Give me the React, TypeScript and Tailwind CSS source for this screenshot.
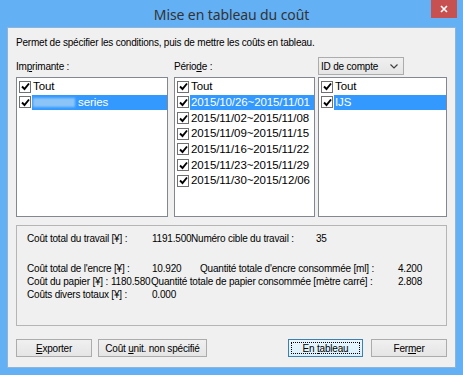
import React from 'react';

const UI = { fontFamily: '"Liberation Sans", Arial, sans-serif' };

// Win8 style checkbox, always checked here
const Check = () => (
  <span className="w-[12px] h-[12px] shrink-0 border border-[#707070] bg-white flex items-center justify-center">
    <svg width="9" height="9" viewBox="0 0 9 9">
      <path d="M1 4.5 L3.5 7 L8 1.5" fill="none" stroke="#000" strokeWidth="1.9" />
    </svg>
  </span>
);

type Row = { text: React.ReactNode; selected?: boolean };

const ListBox = ({ width, rows }: { width: string; rows: Row[] }) => (
  <div className={`${width} h-[140px] border border-[#828790] bg-white pt-[1px]`}>
    {rows.map((r, i) => (
      <div key={i} className="h-[15.67px] flex items-center pl-[2px]">
        <Check />
        <span
          className={`flex-1 h-[15px] leading-[15px] ml-[1px] pl-[1px] whitespace-nowrap text-[11.5px] tracking-[-0.1px] ${
            r.selected ? 'bg-[#3399ff] text-white' : 'text-black'
          }`}
        >
          {r.text}
        </span>
      </div>
    ))}
  </div>
);

const Btn = ({ children, w, focused }: { children: React.ReactNode; w: string; focused?: boolean }) => (
  <div
    className={`${w} h-[18px] flex items-center justify-center border text-black whitespace-nowrap ${
      focused
        ? 'border-[#3c7fb1] bg-gradient-to-b from-[#eaf6fd] to-[#d9f0fc] p-[2px]'
        : 'border-[#acacac] bg-gradient-to-b from-[#f0f0f0] to-[#e5e5e5]'
    }`}
  >
    {focused ? (
      <span className="w-full h-full border border-dotted border-black flex items-center justify-center">{children}</span>
    ) : (
      children
    )}
  </div>
);

const periods = [
  '2015/10/26~2015/11/01',
  '2015/11/02~2015/11/08',
  '2015/11/09~2015/11/15',
  '2015/11/16~2015/11/22',
  '2015/11/23~2015/11/29',
  '2015/11/30~2015/12/06',
];

export default function App() {
  return (
    <div className="w-[463px] h-[375px] bg-[#63b0f5] flex flex-col overflow-hidden" style={UI}>
      {/* Title bar */}
      <div className="h-[27px] relative flex items-center justify-center shrink-0">
        <span className="text-[14px] tracking-[-0.1px] text-[#333] leading-none mt-[2px]" style={{ fontFamily: '"Noto Sans", "Open Sans", sans-serif' }}>
          Mise en tableau du coût
        </span>
        <div className="absolute right-[6px] top-0 w-[26px] h-[18px] bg-[#c75050] flex items-center justify-center">
          <svg width="8" height="8" viewBox="0 0 8 8">
            <path d="M1 1 L7 7 M7 1 L1 7" stroke="#fff" strokeWidth="1.6" />
          </svg>
        </div>
      </div>

      {/* Client area */}
      <div className="mx-[7px] mb-[7px] flex-1 bg-[#f0f0f0] border border-[#8fb4d9] px-[8px] text-[10px] tracking-[-0.2px] text-black flex flex-col">
        <div className="mt-[8px] h-[13px] leading-[13px] whitespace-nowrap">
          Permet de spécifier les conditions, puis de mettre les coûts en tableau.
        </div>

        {/* labels row */}
        <div className="mt-[8px] h-[18px] flex items-end">
          <div className="w-[158px] leading-[13px] pb-[2px]">
            Im<span className="underline">p</span>rimante :
          </div>
          <div className="w-[144px] leading-[13px] pb-[2px]">
            Pério<span className="underline">d</span>e :
          </div>
          <div className="w-[86px] h-[18px] border border-[#acacac] bg-gradient-to-b from-[#f0f0f0] to-[#e5e5e5] flex items-center justify-between pl-[2px] pr-[5px]">
            <span>ID de compte</span>
            <svg width="8" height="5" viewBox="0 0 8 5">
              <path d="M0.5 0.5 L4 4 L7.5 0.5" fill="none" stroke="#404040" strokeWidth="1.2" />
            </svg>
          </div>
        </div>

        {/* lists */}
        <div className="mt-[2px] flex">
          <ListBox
            width="w-[152px]"
            rows={[
              { text: 'Tout' },
              {
                text: (
                  <span className="flex items-center">
                    <span className="inline-block w-[42px] h-[9px] bg-[#8cc4f7] blur-[1px] mr-[3px]" />
                    series
                  </span>
                ),
                selected: true,
              },
            ]}
          />
          <div className="w-[6px]" />
          <ListBox
            width="w-[141px]"
            rows={[{ text: 'Tout' }, ...periods.map((p, i) => ({ text: p, selected: i === 0 }))]}
          />
          <div className="w-[3px]" />
          <ListBox width="w-[129px]" rows={[{ text: 'Tout' }, { text: 'IJS', selected: true }]} />
        </div>

        {/* summary group */}
        <div className="mt-[8px] h-[101px] border border-[#b5b5b5] pl-[10px] pt-[6px]">
          <div className="h-[13px] leading-[13px] flex whitespace-nowrap">
            <span className="w-[125px]">Coût total du travail [¥] :</span>
            <span className="w-[39px]">1191.500</span>
            <span className="w-[125px]">Numéro cible du travail :</span>
            <span>35</span>
          </div>
          <div className="mt-[17px] h-[13px] leading-[13px] flex whitespace-nowrap">
            <span className="w-[125px]">Coût total de l'encre [¥] :</span>
            <span className="w-[48px]">10.920</span>
            <span className="w-[198px]">Quantité totale d'encre consommée [ml] :</span>
            <span>4.200</span>
          </div>
          <div className="h-[13px] leading-[13px] flex whitespace-nowrap">
            <span className="w-[84px]">Coût du papier [¥] :</span>
            <span className="w-[40px]">1180.580</span>
            <span className="w-[247px]">Quantité totale de papier consommée [mètre carré] :</span>
            <span>2.808</span>
          </div>
          <div className="h-[13px] leading-[13px] flex whitespace-nowrap">
            <span className="w-[125px]">Coûts divers totaux [¥] :</span>
            <span>0.000</span>
          </div>
        </div>

        {/* buttons */}
        <div className="mt-[13px] flex">
          <Btn w="w-[76px]">
            <span>
              <span className="underline">E</span>xporter
            </span>
          </Btn>
          <div className="w-[6px]" />
          <Btn w="w-[109px]">
            <span>
              Coût <span className="underline">u</span>nit. non spécifié
            </span>
          </Btn>
          <div className="flex-1" />
          <Btn w="w-[75px]" focused>
            <span>
              En <span className="underline">t</span>ableau
            </span>
          </Btn>
          <div className="w-[8px]" />
          <Btn w="w-[76px]">
            <span>
              Fer<span className="underline">m</span>er
            </span>
          </Btn>
        </div>
      </div>
    </div>
  );
}
